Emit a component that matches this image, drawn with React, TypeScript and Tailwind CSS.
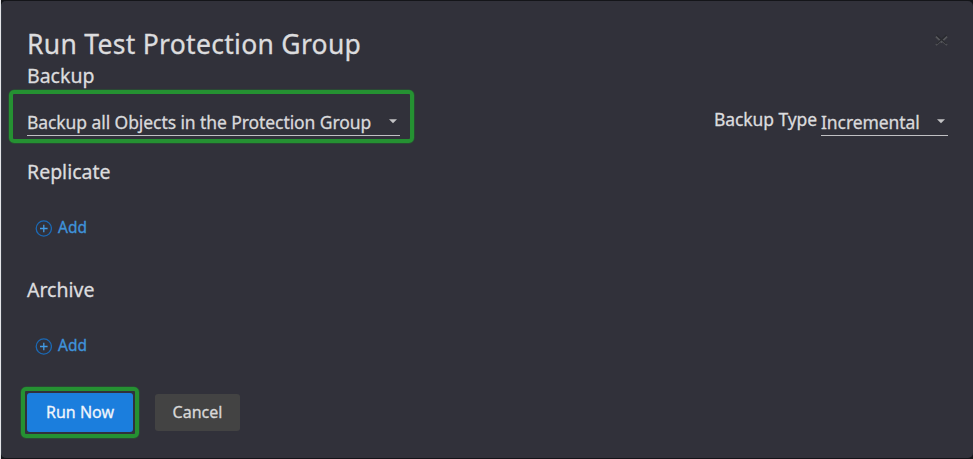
import React from "react";

function Caret() {
  return (
    <svg className="h-[5px] w-[10px] shrink-0" viewBox="0 0 10 5">
      <path d="M1 0.3h8L5 4.3z" fill="#c3c3c5" />
    </svg>
  );
}

function Select({ label, className }: { label: string; className: string }) {
  return (
    <button className={`flex h-[29px] items-center justify-between border-b border-[#c0c0c3] pr-[2px] text-left text-[#d9d9db] ${className}`}>
      <span className="mt-[2px] whitespace-nowrap text-[17.5px] leading-[28px] tracking-[-0.08px]">{label}</span>
      <Caret />
    </button>
  );
}

function AddButton() {
  return (
    <button className="ml-[8px] flex h-6 items-center gap-[6px] text-[#3f93da]">
      <svg className="mt-[5px] h-[17px] w-[17px]" viewBox="0 0 17 17" fill="none">
        <circle cx="8.8" cy="8.5" r="7.6" stroke="#1b69b5" strokeWidth="1.3" />
        <path d="M8.8 4.7v7.6M5 8.5h7.6" stroke="#429be5" strokeWidth="1.3" />
      </svg>
      <span className="mt-px text-[15.5px] leading-6">Add</span>
    </button>
  );
}

export default function App() {
  return (
    <div className="h-[459px] w-[973px] border-l border-[#e4e5e8] bg-[#141519] pt-px pb-px font-['Noto_Sans',sans-serif] [-webkit-text-stroke:0.3px]">
      <div className="h-full rounded-[5px] border-l border-[#383c46] bg-[#31313a] pt-[25px] pr-[25px] pl-[25px] text-[#dcdcde]">
        <div className="flex justify-between">
          <h1 className="whitespace-nowrap text-[26.5px] leading-[36px] tracking-[0.29px]">Run Test Protection Group</h1>
          <button aria-label="Close" className="mt-[8px] h-[12px]">
            <svg className="h-[12px] w-[13px]" viewBox="0 0 13 12" fill="none">
              <path d="M1 2.5l5.5 5.5L12 2.5M1 11l5.5-5L12 11" stroke="#55565a" strokeWidth="1.8" />
              <path d="M1.5 1l10 9M11.5 1l-10 9" stroke="#292a2f" strokeWidth="1.4" />
            </svg>
          </button>
        </div>
        <h2 className="pt-px text-[19.5px] leading-[26px]">Backup</h2>
        <div className="mt-px flex justify-between">
          <div className="-ml-[18px] h-[53px] w-[405px] rounded-[5px] border-4 border-[#259132] pt-[13px] pl-[14px] shadow-[0_0_0_0.5px_#24602f]">
            <Select label="Backup all Objects in the Protection Group" className="w-[373px]" />
          </div>
          <div className="flex gap-[4px] pt-[17px]">
            <span className="mt-[-2px] whitespace-nowrap text-[17.5px] leading-[28px] tracking-[-0.08px]">Backup Type</span>
            <Select label="Incremental" className="w-[127px]" />
          </div>
        </div>
        <h2 className="mt-[16px] text-[19.5px] leading-[26px]">Replicate</h2>
        <div className="mt-[29px]">
          <AddButton />
        </div>
        <h2 className="mt-[39px] text-[19.5px] leading-[26px]">Archive</h2>
        <div className="mt-[29px]">
          <AddButton />
        </div>
        <div className="-ml-[6px] mt-[31px] flex items-center">
          <div className="h-[51px] w-[118px] rounded-[5px] border-4 border-[#259132] p-[2px] shadow-[0_0_0_0.5px_#24602f]">
            <button className="h-[39px] w-[106px] rounded-[3px] bg-[#1b7edd] pb-px text-[16px] text-[#f0f5fb]">Run Now</button>
          </div>
          <button className="ml-[16px] h-[37px] w-[85px] rounded-[3px] bg-[#434343] pb-px text-[16px] text-[#d8d8d8]">Cancel</button>
        </div>
      </div>
    </div>
  );
}
